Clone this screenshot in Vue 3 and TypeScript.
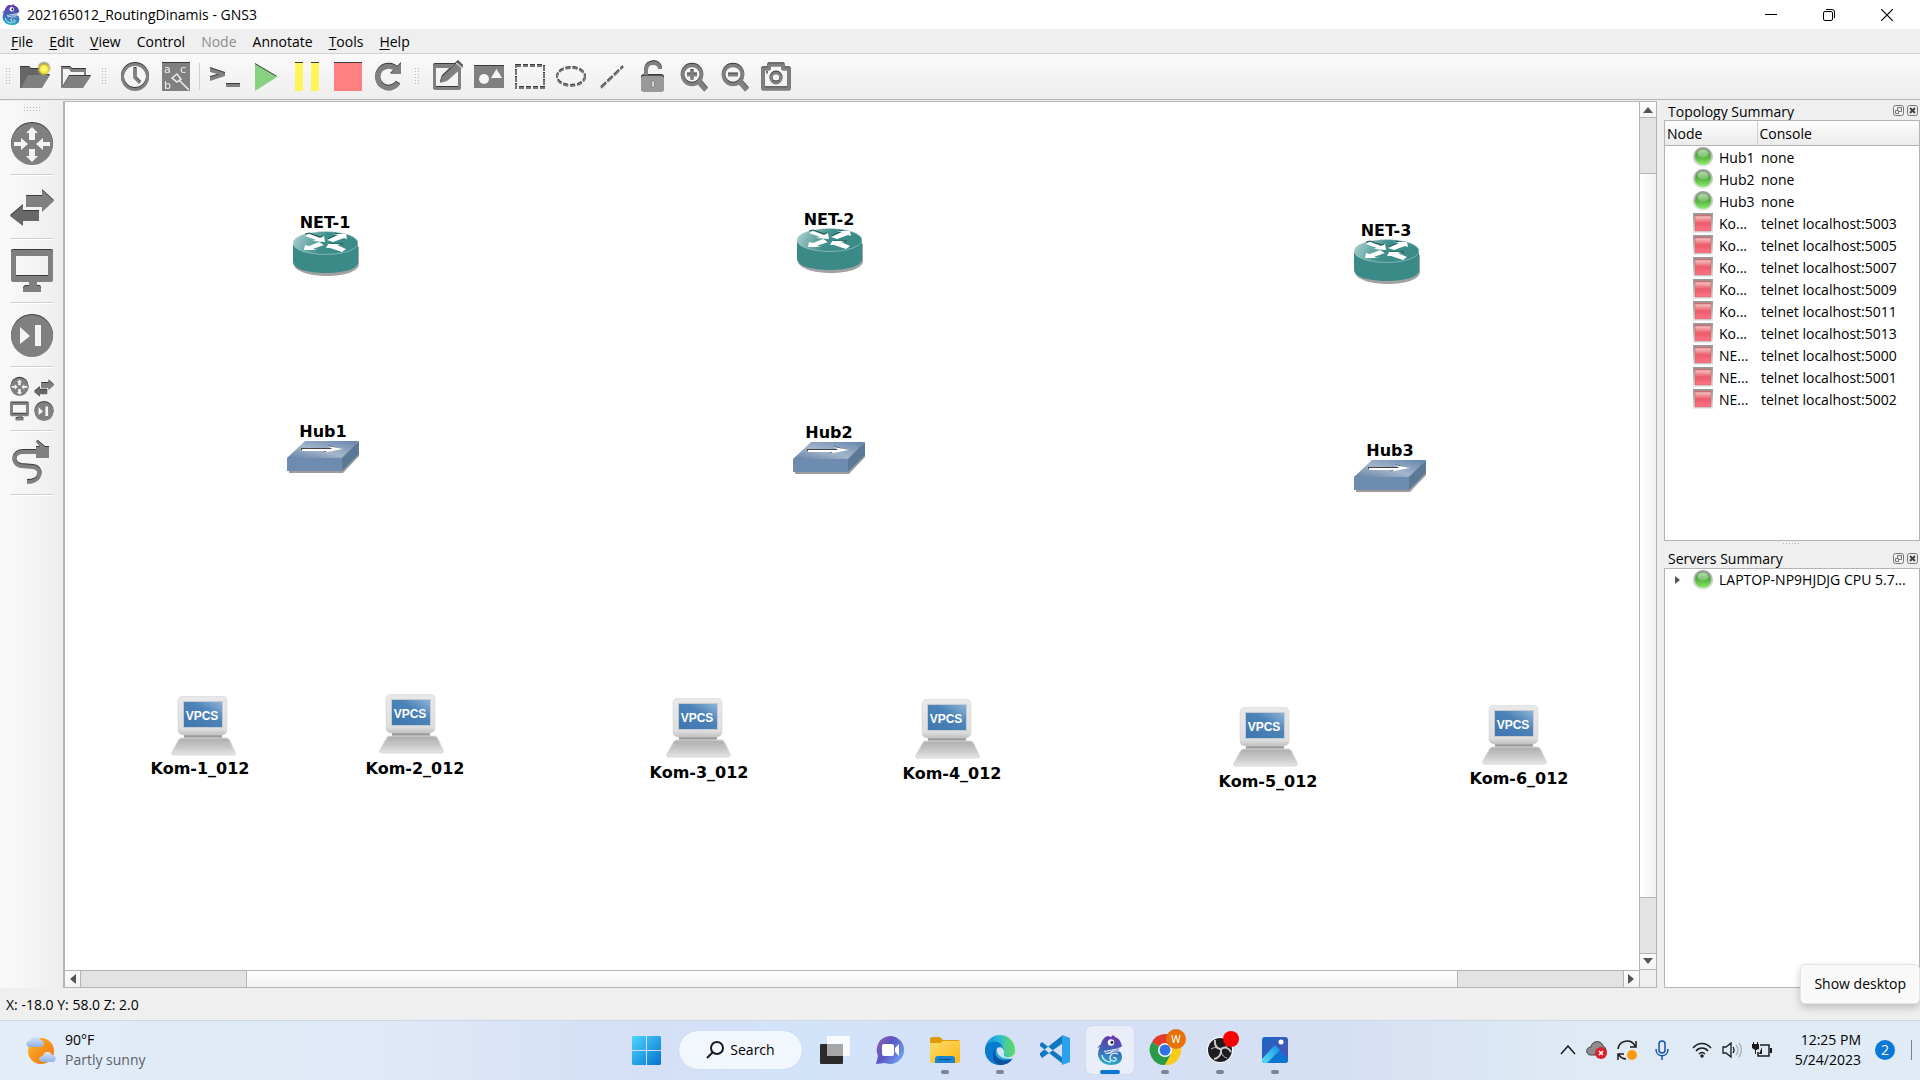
<script setup lang="ts">
type DeviceKind = 'router' | 'hub' | 'vpcs'

interface Device {
  name: string
  kind: DeviceKind
  x: number
  y: number
  labelX: number
  labelY: number
}

interface TopologyRow {
  node: string
  console: string
  running: boolean
}

// Icon origin and label centre, in canvas coordinates
const devices: Device[] = [
  { name: 'NET-1', kind: 'router', x: 228, y: 129, labelX: 260, labelY: 121 },
  { name: 'NET-2', kind: 'router', x: 732, y: 126, labelX: 764, labelY: 118 },
  { name: 'NET-3', kind: 'router', x: 1289, y: 137, labelX: 1321, labelY: 129 },
  { name: 'Hub1', kind: 'hub', x: 222, y: 339, labelX: 258, labelY: 330 },
  { name: 'Hub2', kind: 'hub', x: 728, y: 340, labelX: 764, labelY: 331 },
  { name: 'Hub3', kind: 'hub', x: 1289, y: 358, labelX: 1325, labelY: 349 },
  { name: 'Kom-1_012', kind: 'vpcs', x: 106, y: 594, labelX: 135, labelY: 667 },
  { name: 'Kom-2_012', kind: 'vpcs', x: 314, y: 592, labelX: 350, labelY: 667 },
  { name: 'Kom-3_012', kind: 'vpcs', x: 601, y: 596, labelX: 634, labelY: 671 },
  { name: 'Kom-4_012', kind: 'vpcs', x: 850, y: 597, labelX: 887, labelY: 672 },
  { name: 'Kom-5_012', kind: 'vpcs', x: 1168, y: 605, labelX: 1203, labelY: 680 },
  { name: 'Kom-6_012', kind: 'vpcs', x: 1417, y: 603, labelX: 1454, labelY: 677 },
]

const iconSize: Record<DeviceKind, [number, number]> = {
  router: [66, 45],
  hub: [72, 33],
  vpcs: [65, 60],
}

const rows: TopologyRow[] = [
  { node: 'Hub1', console: 'none', running: true },
  { node: 'Hub2', console: 'none', running: true },
  { node: 'Hub3', console: 'none', running: true },
  ...[5003, 5005, 5007, 5009, 5011, 5013].map((p) => ({
    node: 'Ko...',
    console: `telnet localhost:${p}`,
    running: false,
  })),
  ...[5000, 5001, 5002].map((p) => ({
    node: 'NE...',
    console: `telnet localhost:${p}`,
    running: false,
  })),
]

const menus = [
  { key: 'F', rest: 'ile' },
  { key: 'E', rest: 'dit' },
  { key: 'V', rest: 'iew' },
  { key: '', rest: 'Control' },
  { key: '', rest: 'Node', disabled: true },
  { key: '', rest: 'Annotate' },
  { key: 'T', rest: 'ools' },
  { key: 'H', rest: 'elp' },
]
</script>

<template>
  <div class="screen">
    <svg class="defs" width="0" height="0" aria-hidden="true">
      <defs>
        <linearGradient id="gTeal" x1="0" y1="0.2" x2="1" y2="0.4">
          <stop offset="0" stop-color="#a9cfce" /><stop offset="0.5" stop-color="#3f8f8c" /><stop offset="1" stop-color="#3a8a87" />
        </linearGradient>
        <linearGradient id="gHub" x1="0" y1="1" x2="1" y2="0">
          <stop offset="0" stop-color="#6482a6" /><stop offset="0.45" stop-color="#a3b5cb" /><stop offset="1" stop-color="#6484ac" />
        </linearGradient>
        <linearGradient id="gCase" x1="0" y1="0" x2="0" y2="1">
          <stop offset="0" stop-color="#e9e9e9" /><stop offset="0.85" stop-color="#dedede" /><stop offset="1" stop-color="#c0c0c0" />
        </linearGradient>
        <linearGradient id="gBase" x1="0" y1="0" x2="0" y2="1">
          <stop offset="0" stop-color="#adadad" /><stop offset="0.6" stop-color="#cbcbcb" /><stop offset="1" stop-color="#e6e6e6" />
        </linearGradient>
        <linearGradient id="gScreen" x1="0" y1="1" x2="1" y2="0">
          <stop offset="0" stop-color="#3f76ae" /><stop offset="0.6" stop-color="#4c83b8" /><stop offset="1" stop-color="#8db5d8" />
        </linearGradient>
        <linearGradient id="gRing" x1="0" y1="0" x2="0" y2="1">
          <stop offset="0" stop-color="#989898" /><stop offset="1" stop-color="#ececec" />
        </linearGradient>
        <linearGradient id="gGreen" x1="0" y1="0" x2="0" y2="1">
          <stop offset="0" stop-color="#4c9a3c" /><stop offset="0.5" stop-color="#55b340" /><stop offset="1" stop-color="#8cf06a" />
        </linearGradient>
        <linearGradient id="gGloss" x1="0" y1="0" x2="0" y2="1">
          <stop offset="0" stop-color="#fff" stop-opacity="0.6" /><stop offset="1" stop-color="#fff" stop-opacity="0.2" />
        </linearGradient>
        <linearGradient id="gRed" x1="0" y1="0" x2="0" y2="1">
          <stop offset="0" stop-color="#c05a5e" /><stop offset="0.12" stop-color="#f6b9b9" /><stop offset="0.5" stop-color="#ee5a69" /><stop offset="1" stop-color="#ff7585" />
        </linearGradient>
        <linearGradient id="gGns" x1="0.5" y1="0" x2="0.4" y2="1">
          <stop offset="0" stop-color="#6a35b0" /><stop offset="0.5" stop-color="#3f63b5" /><stop offset="1" stop-color="#25b0c8" />
        </linearGradient>
        <linearGradient id="gWin" x1="0" y1="0" x2="1" y2="1">
          <stop offset="0" stop-color="#4fd5ff" /><stop offset="1" stop-color="#0473d0" />
        </linearGradient>
        <linearGradient id="gChat" x1="0" y1="0" x2="1" y2="0.6">
          <stop offset="0" stop-color="#9a5fa8" /><stop offset="0.5" stop-color="#5b57c4" /><stop offset="1" stop-color="#6e9bf0" />
        </linearGradient>
        <linearGradient id="gFolder" x1="0" y1="0" x2="1" y2="1">
          <stop offset="0" stop-color="#ffdb6a" /><stop offset="1" stop-color="#f9b813" />
        </linearGradient>
        <linearGradient id="gEdge" x1="0" y1="0.5" x2="1" y2="0.4">
          <stop offset="0" stop-color="#0c86d8" /><stop offset="0.5" stop-color="#29b8dc" /><stop offset="1" stop-color="#66e04a" />
        </linearGradient>
        <linearGradient id="gPhoto" x1="0" y1="0" x2="1" y2="1">
          <stop offset="0" stop-color="#1666c8" /><stop offset="1" stop-color="#5b4fae" />
        </linearGradient>
        <linearGradient id="gPeak" x1="0" y1="1" x2="1" y2="0">
          <stop offset="0" stop-color="#5be3fb" /><stop offset="1" stop-color="#1a90e0" />
        </linearGradient>
        <linearGradient id="gSun" x1="0" y1="0" x2="1" y2="1">
          <stop offset="0" stop-color="#f7be2c" /><stop offset="1" stop-color="#f4680c" />
        </linearGradient>
        <linearGradient id="gCloud" x1="0" y1="0" x2="0" y2="1">
          <stop offset="0" stop-color="#dce8fa" /><stop offset="1" stop-color="#8fb0ea" />
        </linearGradient>
        <radialGradient id="gGlow">
          <stop offset="0" stop-color="#fff9a0" /><stop offset="0.5" stop-color="#fdf03c" /><stop offset="1" stop-color="#fdf03c" stop-opacity="0" />
        </radialGradient>
      </defs>

      <symbol id="router" viewBox="0 0 66 45">
        <path d="M1 16v17c0 7 15 12 33 12s32-5 32-12V16z" fill="#a2a2a2" />
        <path d="M0 13v18c0 7 15 11 33 11s32-4 32-11V13z" fill="#3a8a87" />
        <ellipse cx="32.500" cy="12" rx="32.500" ry="11.500" fill="url(#gTeal)" stroke="#c4dddc" stroke-width="0.500" />
        <path d="M12 3l4-1 11 4 3-1M35 8l10-5-3-1M31 13l-11 5M34 14l3-1 13 0" fill="none" stroke="#1d4f4d" />
        <g fill="#fff">
          <path d="M12 5l4-2 11 4 4-2 1 6-13-1 4-1z" />
          <path d="M34 9l11-5-5-1 13 0 1 5-3-1-11 4z" />
          <path d="M31 14l-11 4 4 1-13 0 1-5 4 1 10-4z" />
          <path d="M53 18l-9-4 4-1-13 0-2 4 4 0 12 4z" />
        </g>
      </symbol>
      <symbol id="hub" viewBox="0 0 72 33">
        <path d="M2 18v14h54L72 15V2z" fill="#9c9c9c" />
        <path d="M0 17L18 0h54L55 17z" fill="url(#gHub)" />
        <path d="M0 17h55v13H0z" fill="#6d8cb0" />
        <path d="M55 17L72 0v13L55 30z" fill="#5b7897" />
        <path d="M14 7h30l-3-3 13 4-18 4 3-3H14z" fill="#444" />
        <path d="M15 8h30l-4-3 15 3-20 4 4-2H15z" fill="#fff" />
      </symbol>
      <symbol id="vpcs" viewBox="0 0 65 60">
        <path d="M13 38h38v5H13z" fill="#9a9a9a" />
        <path d="M11 42h44c2 0 3 1 4 3l5 11c1 2 0 3-2 3H3c-2 0-3-1-2-3l6-11c1-2 2-3 4-3z" fill="url(#gBase)" stroke="#d8d8d8" />
        <rect x="7" y="0" width="49" height="39" rx="5" fill="url(#gCase)" stroke="#cfcfcf" stroke-width="0.500" />
        <rect x="12" y="5" width="40" height="27" fill="#c3cbd3" />
        <rect x="13" y="6" width="38" height="25" fill="url(#gScreen)" />
      </symbol>
      <symbol id="led-on" viewBox="0 0 20 20">
        <circle cx="10" cy="10" r="10" fill="url(#gRing)" />
        <circle cx="10" cy="10" r="8" fill="url(#gGreen)" />
        <ellipse cx="10" cy="6.500" rx="5.500" ry="4" fill="url(#gGloss)" />
      </symbol>
      <symbol id="led-off" viewBox="0 0 20 20">
        <rect width="20" height="20" fill="url(#gRing)" />
        <rect x="2" y="2" width="16" height="16" fill="url(#gRed)" stroke="#b46468" stroke-width="0.500" />
      </symbol>
      <symbol id="gns" viewBox="0 0 28 30">
        <path d="M12 1l3 1 2-2 2 2c3 1 5 3 6 6l1 3c-2 2-4 2-6 2h5l-3 2c3 2 4 4 4 7 0 5-4 8-11 8C8 30 3 26 2 20c0-4 1-6 2-8L1 13l4-4C6 5 8 2 12 1z" fill="url(#gGns)" />
        <circle cx="15" cy="7.500" r="3.200" fill="#fff" />
        <circle cx="16" cy="7.500" r="1.400" fill="#15203d" />
        <path d="M8 16c3 1 6-1 8-1l11-2M17 16l9 0M9 18c4 1 7-1 8-2" fill="none" stroke="#e6eef8" stroke-width="1.200" />
        <path d="M22 19c-4-2-8 0-8 4 0 3 5 4 6 2s-2-3-3-2M6 20c0 4 4 7 9 7" fill="none" stroke="#d7f0f5" stroke-width="1.300" />
      </symbol>
      <symbol id="dev-router" viewBox="0 0 44 44">
        <circle cx="22" cy="23" r="21" fill="#808080" />
        <path d="M22 6l6 6h-3v7h-6v-7h-3zM22 41l-6-6h3v-7h6v7h3zM4 21h7v-4l7 6-7 6v-4H4zM40 21h-7v-4l-7 6 7 6v-4h7z" fill="#f4f4f4" />
      </symbol>
      <symbol id="dev-switch" viewBox="0 0 44 44">
        <path d="M16 11h16V5l12 11-12 11v-5H16z" fill="#808080" />
        <path d="M29 26H13v-6L0 31l13 10v-5h16z" fill="#686868" />
      </symbol>
      <symbol id="dev-pc" viewBox="0 0 44 44">
        <path fill-rule="evenodd" d="M3 1h38q2 0 2 2v28q0 2-2 2H27v4h3l1 2v4H13v-4l2-2h4v-4H3q-2 0-2-2V3q0-2 2-2zM6 7v20h32V7z" fill="#808080" />
      </symbol>
      <symbol id="dev-sec" viewBox="0 0 44 44">
        <circle cx="22" cy="23" r="21" fill="#808080" />
        <path d="M10 14l10 9-10 8zM25 12h6v21h-6z" fill="#f4f4f4" />
      </symbol>
    </svg>

    <header class="titlebar">
      <svg class="title-icon" viewBox="0 0 28 30"><use href="#gns" /></svg>
      <h1>202165012_RoutingDinamis - GNS3</h1>
      <div class="window-buttons">
        <button aria-label="Minimize"><svg width="12" height="12"><path d="M0 5.500h12" stroke="#000" /></svg></button>
        <button aria-label="Restore">
          <svg width="12" height="12" fill="none" stroke="#000"><rect x="0.500" y="2.500" width="9" height="9" rx="1.500" /><path d="M3 .5h6q2.500 0 2.500 2.500v6" /></svg>
        </button>
        <button aria-label="Close"><svg width="12" height="12"><path d="M0 0l12 12M12 0L0 12" stroke="#000" stroke-width="1.200" /></svg></button>
      </div>
    </header>

    <nav class="menubar">
      <button v-for="m in menus" :key="m.rest" :disabled="m.disabled"><u v-if="m.key">{{ m.key }}</u>{{ m.rest }}</button>
    </nav>

    <div class="toolbar">
      <span class="grip first"></span>
      <button aria-label="New project">
        <svg viewBox="0 0 32 32"><path class="dark" d="M1 6h9l2 2h15v10H10L3 27H1z" /><path d="M9 14h22l-8 13H2z" class="g" /><circle cx="25" cy="8" r="7" fill="url(#gGlow)" /></svg>
      </button>
      <button aria-label="Open project">
        <svg viewBox="0 0 32 32"><path class="g" d="M1 6h9l2 2h14v6h-2v-3H11L9 8H3v17l-1 2H1z" /><path d="M9 15h22l-8 12H2z" class="g" /></svg>
      </button>
      <span class="grip"></span>
      <button aria-label="Snapshots">
        <svg viewBox="0 0 32 32"><circle cx="16" cy="16" r="12.500" fill="none" stroke="#808080" stroke-width="3" /><path d="M16 7v10l5 5" fill="none" stroke="#808080" stroke-width="3" /></svg>
      </button>
      <button aria-label="Show interface labels">
        <svg viewBox="0 0 32 32"><path class="g" d="M2 2h28v28H2z" /><g fill="#eee" font-family="DejaVu Sans, sans-serif" font-size="11"><text x="4" y="12">a</text><text x="20" y="12">c</text><text x="4" y="28">b</text></g><path d="M12 17l5-4 4 5-4 3zM19 19l10 10" fill="none" stroke="#eee" stroke-width="1.500" /></svg>
      </button>
      <span class="separator"></span>
      <button aria-label="Console">
        <svg viewBox="0 0 32 32"><path class="g" d="M1 7l15 5v3L1 20v-4l9-2.500L1 11zM17 23h14v3H17z" /></svg>
      </button>
      <button aria-label="Start"><svg viewBox="0 0 32 32"><path d="M5 3l22 13L5 30z" fill="#88d180" /></svg></button>
      <button aria-label="Pause"><svg viewBox="0 0 32 32"><path d="M4 2h8v28H4zM20 2h8v28h-8z" fill="#fff45c" /></svg></button>
      <button aria-label="Stop"><svg viewBox="0 0 32 32"><path d="M2 2h28v28H2z" fill="#ff8080" /></svg></button>
      <button aria-label="Reload">
        <svg viewBox="0 0 32 32"><path d="M25 22a11 11 0 1 1-1-13" fill="none" stroke="#808080" stroke-width="5" /><path class="g" d="M28 2v11H17z" /></svg>
      </button>
      <span class="grip"></span>
      <button aria-label="Add a note">
        <svg viewBox="0 0 32 32"><path class="g" fill-rule="evenodd" d="M3 3h24q2 0 2 2v22q0 2-2 2H3q-2 0-2-2V5q0-2 2-2zM4 7v19h22V7z" /><path class="g soft" d="M8 22l2-6L26 1l5 5-16 14z" /><path d="M24 2l6 5" stroke="#eee" /></svg>
      </button>
      <button aria-label="Insert a picture">
        <svg viewBox="0 0 32 32"><path class="g" d="M1 5h30v22H1z" /><circle cx="11" cy="18" r="5" fill="#f4f4f4" /><path d="M18 17l5.500-9 5.500 9z" fill="#f4f4f4" /></svg>
      </button>
      <button aria-label="Draw a rectangle">
        <svg viewBox="0 0 32 32"><rect x="2" y="5" width="28" height="22" fill="none" stroke="#777" stroke-width="2" stroke-dasharray="5 2" /></svg>
      </button>
      <button aria-label="Draw an ellipse">
        <svg viewBox="0 0 32 32"><ellipse cx="16" cy="16" rx="14" ry="9" fill="none" stroke="#777" stroke-width="2" stroke-dasharray="5 2" /></svg>
      </button>
      <button aria-label="Draw a line">
        <svg viewBox="0 0 32 32"><path d="M5 27L27 6" stroke="#777" stroke-width="2" stroke-dasharray="7 2" /></svg>
      </button>
      <button aria-label="Lock items">
        <svg viewBox="0 0 32 32"><path d="M9 16V9c0-9 14-9 14-1" fill="none" stroke="#808080" stroke-width="4" /><rect class="soft" x="4" y="15" width="23" height="16" rx="3" fill="#999" /><path d="M15 20h2v6h-2z" fill="#fff" stroke="#555" stroke-width="0.500" /></svg>
      </button>
      <button aria-label="Zoom in">
        <svg viewBox="0 0 32 32" fill="none" stroke="#808080"><circle cx="14" cy="14" r="9.500" stroke-width="3.500" /><path d="M20 20l8 9" stroke-width="5" /><path d="M14 9v10M9 14h10" stroke-width="3" /></svg>
      </button>
      <button aria-label="Zoom out">
        <svg viewBox="0 0 32 32" fill="none" stroke="#808080"><circle cx="14" cy="14" r="9.500" stroke-width="3.500" /><path d="M20 20l8 9" stroke-width="5" /><path d="M9 14h10" stroke-width="3" /></svg>
      </button>
      <button aria-label="Take a screenshot">
        <svg viewBox="0 0 32 32"><path d="M3 8h6V4h14v4h6v20H3z" fill="none" stroke="#808080" stroke-width="3.500" stroke-linejoin="round" /><circle cx="16" cy="17" r="5" fill="none" stroke="#808080" stroke-width="3" /><circle cx="7" cy="12" r="1" class="g" /></svg>
      </button>
    </div>

    <main class="workspace">
      <aside class="devices">
        <span class="grip wide"></span>
        <button aria-label="Routers"><svg viewBox="0 0 44 44"><use href="#dev-router" /></svg></button>
        <button aria-label="Switches"><svg viewBox="0 0 44 44"><use href="#dev-switch" /></svg></button>
        <button aria-label="End devices"><svg viewBox="0 0 44 44"><use href="#dev-pc" /></svg></button>
        <button aria-label="Security devices"><svg viewBox="0 0 44 44"><use href="#dev-sec" /></svg></button>
        <button aria-label="All devices">
          <svg viewBox="0 0 44 44">
            <use href="#dev-router" x="0" y="0" width="19" height="19" />
            <use href="#dev-switch" x="24" y="1" width="20" height="20" />
            <use href="#dev-pc" x="0" y="25" width="19" height="19" />
            <use href="#dev-sec" x="24" y="24" width="20" height="20" />
          </svg>
        </button>
        <button aria-label="Add a link">
          <svg viewBox="0 0 44 44"><path d="M27 11H13c-10 0-12 12-2 14l12 1c10 1 9 15-6 15" fill="none" stroke="#808080" stroke-width="4" /><path class="g" d="M26 6h4l-4-5 2-1 7 6h4v11H26z" /></svg>
        </button>
      </aside>

      <section class="canvas-frame">
        <div class="canvas">
          <template v-for="d in devices" :key="d.name">
            <svg
              class="device"
              :width="iconSize[d.kind][0]"
              :height="iconSize[d.kind][1]"
              :style="{ left: d.x + 'px', top: d.y + 'px' }"
            >
              <use :href="'#' + d.kind" />
              <text v-if="d.kind === 'vpcs'" class="screen-text" x="31" y="24">VPCS</text>
            </svg>
            <span class="device-label" :style="{ left: d.labelX + 'px', top: d.labelY + 'px' }">{{ d.name }}</span>
          </template>
        </div>
        <div class="vbar">
          <button aria-label="Scroll up"><svg width="10" height="6"><path d="M0 6l5-6 5 6z" fill="#555" /></svg></button>
          <span class="groove"></span><span class="handle"></span><span class="groove"></span>
          <button aria-label="Scroll down"><svg width="10" height="6"><path d="M0 0l5 6 5-6z" fill="#555" /></svg></button>
        </div>
        <div class="hbar">
          <button aria-label="Scroll left"><svg width="6" height="10"><path d="M6 0L0 5l6 5z" fill="#555" /></svg></button>
          <span class="groove"></span><span class="handle"></span><span class="groove"></span>
          <button aria-label="Scroll right"><svg width="6" height="10"><path d="M0 0l6 5-6 5z" fill="#555" /></svg></button>
        </div>
        <div class="corner"></div>
      </section>

      <aside class="docks">
        <section class="dock">
          <header>
            <h2>Topology Summary</h2>
            <button aria-label="Float"><svg width="11" height="11" fill="none" stroke="#777"><rect x="0.500" y="0.500" width="10" height="10" rx="2" /><path d="M2.500 5.500h3v3h-3zM4.500 5V2.500h4v4H6" /></svg></button>
            <button aria-label="Close"><svg width="11" height="11" fill="none" stroke="#777"><rect x="0.500" y="0.500" width="10" height="10" rx="2" /><path d="M3 3l5 5M8 3L3 8" stroke="#444" stroke-width="2" /></svg></button>
          </header>
          <div class="dock-body">
            <table>
              <thead><tr><th class="col-node">Node</th><th>Console</th></tr></thead>
              <tbody>
                <tr v-for="(r, i) in rows" :key="i">
                  <td class="node-cell"><div><svg width="20" height="20"><use :href="r.running ? '#led-on' : '#led-off'" /></svg>{{ r.node }}</div></td>
                  <td>{{ r.console }}</td>
                </tr>
              </tbody>
            </table>
          </div>
        </section>
        <span class="grip splitter"></span>
        <section class="dock">
          <header>
            <h2>Servers Summary</h2>
            <button aria-label="Float"><svg width="11" height="11" fill="none" stroke="#777"><rect x="0.500" y="0.500" width="10" height="10" rx="2" /><path d="M2.500 5.500h3v3h-3zM4.500 5V2.500h4v4H6" /></svg></button>
            <button aria-label="Close"><svg width="11" height="11" fill="none" stroke="#777"><rect x="0.500" y="0.500" width="10" height="10" rx="2" /><path d="M3 3l5 5M8 3L3 8" stroke="#444" stroke-width="2" /></svg></button>
          </header>
          <div class="dock-body">
            <div class="server">
              <svg width="5" height="8"><path d="M0 0l5 4-5 4z" fill="#555" /></svg>
              <svg class="led" width="20" height="20"><use href="#led-on" /></svg>
              <span>LAPTOP-NP9HJDJG CPU 5.7...</span>
            </div>
          </div>
        </section>
      </aside>
    </main>

    <div class="statusbar">X: -18.0 Y: 58.0 Z: 2.0</div>

    <footer class="taskbar">
      <button class="weather">
        <svg width="30" height="28" viewBox="0 0 30 28">
          <circle cx="15" cy="15" r="13" fill="url(#gSun)" />
          <path d="M4 11c-5 0-5-6 0-6 1-6 9-6 10-1 5 0 5 7 0 7z" fill="url(#gCloud)" />
          <path d="M17 26c-5 0-5-6 0-6 1-6 8-5 9-1 5 0 5 7 0 7z" fill="url(#gCloud)" />
        </svg>
        <span class="weather-text"><span>90°F</span><span class="muted">Partly sunny</span></span>
      </button>

      <div class="apps">
        <button aria-label="Start">
          <svg width="29" height="29" viewBox="0 0 29 29"><path d="M1 0h13v14H0V1zM15 0h13l1 1v13H15zM0 15h14v14H1l-1-1zM15 15h14v13l-1 1H15z" fill="url(#gWin)" /></svg>
        </button>
        <button class="search">
          <svg width="18" height="18" fill="none" stroke="#1b1b1b" stroke-width="2"><circle cx="11" cy="7" r="6" /><path d="M7 11l-6 6" /></svg>
          Search
        </button>
        <button aria-label="Task view">
          <svg width="30" height="28" viewBox="0 0 30 28"><rect y="8" width="23" height="20" rx="1" fill="#2b2b2b" /><rect x="7" y="0" width="23" height="20" rx="1" fill="#fff" fill-opacity="0.850" /><path d="M7 8h16v12H7z" fill="#a6a6a6" /></svg>
        </button>
        <button aria-label="Chat">
          <svg width="29" height="28" viewBox="0 0 29 28"><path d="M15 0a14 14 0 1 1-6 27l-9 1 2-8A14 14 0 0 1 15 0z" fill="url(#gChat)" /><rect x="6" y="8" width="12" height="12" rx="2" fill="#fff" /><path d="M19 12l4-4v12l-4-4z" fill="#fff" /></svg>
        </button>
        <button aria-label="File Explorer" class="running">
          <svg width="30" height="27" viewBox="0 0 30 27"><path d="M0 2q0-2 2-2h8l3 3h15q2 0 2 2v5H0z" fill="#e09a05" /><path d="M0 6h10l3-2h17v20q0 2-2 2H2q-2 0-2-2z" fill="url(#gFolder)" /><path d="M5 26v-4q0-3 3-3h14q3 0 3 3v4z" fill="#1683d3" /><path d="M9 22.500h12" stroke="#0b4a86" /></svg>
        </button>
        <button aria-label="Edge" class="running">
          <svg width="30" height="30" viewBox="0 0 30 30"><circle cx="15" cy="15" r="15" fill="url(#gEdge)" /><path d="M0 15C1 7 8 6 12 7c4 1 7 4 7 8-4-5-9-1-8 4 1 5 8 7 17 4-4 6-9 7-13 7C7 30 0 24 0 15z" fill="#0a7ad0" /><path d="M11 13c-4 7 2 15 14 12 1 0 3-1 3-2-3 5-8 7-13 7-6-1-10-10-4-17z" fill="#11509e" /><path d="M30 17c-1 4-5 6-9 5-3-1-2-2-2-5 0-4-4-6-7-4 0 0-2 8 8 10 4 1 8 1 8 0z" fill="#d8e2f6" /><path d="M15 12c4 0 4 3 4 6 1 2 6 2 11-2 0-8-6-10-9-10z" fill="#53d28a" opacity="0.500" /></svg>
        </button>
        <button aria-label="Visual Studio Code">
          <svg width="30" height="30" viewBox="0 0 30 30"><path d="M0 9l2-2 21 16v6L0 11zM0 20l2 3L23 8V0L0 18z" fill="#0f78c0" /><path d="M22 0l8 3v24l-8 3z" fill="#2ba0ee" /></svg>
        </button>
        <button aria-label="GNS3" class="active">
          <svg width="28" height="30"><use href="#gns" /></svg>
        </button>
        <button aria-label="Chrome" class="running">
          <svg width="44" height="44" viewBox="-7 -1 44 44">
            <path d="M15 21L2 13a15 15 0 0 1 26-1z" fill="#e23a2e" /><path d="M15 21L2 13a15 15 0 0 0 13 23l7-12z" fill="#2a9c48" /><path d="M15 21l13-9a15 15 0 0 1-13 24l6-11z" fill="#fccb1a" />
            <circle cx="15" cy="21" r="7" fill="#fff" /><circle cx="15" cy="21" r="5.500" fill="#2f72e4" />
            <circle cx="26" cy="10" r="10" fill="#e8710a" /><text x="26" y="14" text-anchor="middle" font-size="11" fill="#fff" font-family="Roboto, sans-serif">W</text>
          </svg>
        </button>
        <button aria-label="OBS Studio" class="running">
          <svg width="40" height="40" viewBox="-7 -1 40 40"><circle cx="13" cy="19" r="13" fill="#fff" /><circle cx="13" cy="19" r="12" fill="#1c1b20" /><g fill="none" stroke="#c9c9cb" stroke-width="2"><path d="M8 9c-1 5 2 9 6 9M14 18c4-3 8-1 10 3M14 18c1 5-2 9-7 10" /><path d="M4 18c3-2 7-2 9 1M20 10c1 4-2 8-6 8M20 27c-4-1-6-4-6-9" stroke-width="1" /></g><circle cx="24" cy="8" r="8" fill="#f90000" /></svg>
        </button>
        <button aria-label="Photos" class="running">
          <svg width="26" height="26" viewBox="0 0 26 26"><rect width="26" height="26" rx="3" fill="url(#gPhoto)" /><path d="M0 22L11 10q2-2 4 0l11 11v2q0 3-3 3H3q-3 0-3-3z" fill="#0d74cf" /><path d="M0 22L11 10q2-2 4 0l3 3L5 26H3q-3 0-3-3z" fill="url(#gPeak)" /><circle cx="19" cy="5" r="2.500" fill="#fff" /></svg>
        </button>
      </div>

      <div class="tray">
        <button class="t-chevron" aria-label="Hidden icons"><svg width="16" height="10"><path d="M1 9l7-8 7 8" fill="none" stroke="#1b1b1b" stroke-width="1.500" /></svg></button>
        <button aria-label="OneDrive"><svg width="21" height="18" viewBox="0 0 21 18"><path d="M4 14c-5-1-4-8 1-8 1-7 11-7 12-1 4 1 4 9 0 9z" fill="#8d8d8d" stroke="#444" /><circle cx="15" cy="12" r="6" fill="#d9222b" /><path d="M13 10l4 4M17 10l-4 4" stroke="#fff" stroke-width="1.500" /></svg></button>
        <button aria-label="Updates"><svg width="21" height="21" viewBox="0 0 21 21"><path d="M1 9a9 9 0 0 1 17-3M19 1v6h-6M9 19a9 9 0 0 1-7-4M1 20v-6h6" fill="none" stroke="#1b1b1b" stroke-width="1.500" /><circle cx="15" cy="15" r="5" fill="#ff9a0a" /></svg></button>
        <button class="t-mic" aria-label="Microphone"><svg width="14" height="20" viewBox="0 0 14 20" fill="none" stroke="#1553a4" stroke-width="1.500"><rect x="4" y="1" width="6" height="12" rx="3" /><path d="M1 9c0 9 12 9 12 0M7 16v4" /></svg></button>
        <button class="status-icons" aria-label="Network, volume and battery">
          <svg width="20" height="16" viewBox="0 0 20 16" fill="none" stroke="#1b1b1b" stroke-width="1.500"><path d="M1 6c5-6 13-6 18 0M4 9c3-4 9-4 12 0M7 12c2-2 4-2 6 0" /><circle cx="10" cy="14" r="1" fill="#1b1b1b" /></svg>
          <svg width="20" height="16" viewBox="0 0 20 16" fill="none" stroke="#1b1b1b" stroke-width="1.300"><path d="M1 5h3l5-4v14l-5-4H1zM11 5q2 3 0 6" /><path d="M14 3q4 5 0 10M17 1q5 7 0 14" stroke="#a9b1b8" /></svg>
          <svg width="20" height="16" viewBox="0 0 20 16"><path d="M8 3h9v11H6v-4" fill="none" stroke="#1b1b1b" stroke-width="1.500" /><path d="M18 6h2v5h-2zM10 5v7H7zM1 0h1v2h3V0h1v2h1v5L4 8v4H3V8L0 6V2h1z" fill="#1b1b1b" /></svg>
        </button>
        <button class="clock"><span>12:25 PM</span><span>5/24/2023</span></button>
        <button class="badge" aria-label="2 notifications">2</button>
        <button class="peek" aria-label="Show desktop"></button>
        <span class="tooltip" role="tooltip">Show desktop</span>
      </div>
    </footer>
  </div>
</template>

<style>
body {
  margin: 0;
}
</style>

<style scoped>
.screen {
  display: flex;
  flex-direction: column;
  min-height: 100vh;
  background: #efefef;
  color: #000;
  font: 14px/20px "Open Sans", "Noto Sans", sans-serif;
}
.screen *,
.screen *::before,
.screen *::after {
  box-sizing: border-box;
}
.defs {
  position: absolute;
}
button {
  display: flex;
  align-items: center;
  justify-content: center;
  padding: 0;
  border: 0;
  background: none;
  color: inherit;
  font: inherit;
}
h1,
h2 {
  margin: 0;
  font: inherit;
}
svg {
  display: block;
  flex: none;
}

.titlebar {
  display: flex;
  align-items: center;
  height: 29px;
  padding: 0 4px 0 1px;
  background: #fff;
}
.title-icon {
  width: 20px;
  height: 21px;
  margin-right: 6px;
}
.window-buttons {
  display: flex;
  margin-left: auto;
}
.window-buttons button {
  width: 58px;
  height: 29px;
}

.menubar {
  display: flex;
  gap: 16px;
  height: 25px;
  padding: 1px 11px 0;
  border-bottom: 1px solid #d2d2d2;
}
.menubar button:disabled {
  color: #8d8d8d;
}
.menubar u {
  text-underline-offset: 2px;
}

.toolbar {
  display: flex;
  align-items: center;
  height: 46px;
  border-bottom: 1px solid #b4b4b4;
  background: linear-gradient(#fafafa, #eeeeee);
}
.toolbar button {
  width: 41px;
  height: 45px;
}
.toolbar button svg {
  width: 32px;
  height: 32px;
  filter: drop-shadow(0 -1px 0 #3a3a3a);
}
.g {
  fill: #808080;
}
.dark {
  fill: #666;
}
.soft {
  filter: drop-shadow(0 -1px 0 #555);
}
.grip {
  flex: none;
  width: 18px;
  height: 18px;
  background: conic-gradient(from 270deg at 1px 1px, #b4b4b4 90deg, transparent 0) 0 0 / 3px 3px;
  background-clip: content-box;
  background-origin: content-box;
  padding: 0 6px;
}
.grip.first {
  width: 14px;
  padding: 0 3px 0 6px;
}
.separator {
  width: 8px;
  height: 27px;
  background: linear-gradient(#cfcfcf, #cfcfcf) 3px 0 / 1px 100% no-repeat;
}

.workspace {
  display: flex;
  flex: 1;
  padding-top: 1px;
}
.devices {
  width: 63px;
  flex: none;
  padding: 6px 10px 0 10px;
  background: linear-gradient(90deg, #fafafa, #eeeeee);
}
.grip.wide {
  display: block;
  width: 44px;
  height: 4px;
  padding: 0 12px 0 14px;
}
.devices button {
  width: 44px;
  height: 64px;
  border-bottom: 1px solid #cfcfcf;
  box-shadow: 0 1px 0 #fff;
}
.devices svg {
  width: 44px;
  height: 44px;
  filter: drop-shadow(0 -1px 0 #3a3a3a);
}

.canvas-frame {
  flex: 1;
  min-width: 0;
  display: grid;
  grid-template-columns: 1fr 18px;
  grid-template-rows: 1fr 18px;
  border: solid #b4b4b4;
  border-width: 1px 0 0 2px;
}
.canvas {
  position: relative;
  overflow: hidden;
  background: #fff;
}
.device {
  position: absolute;
}
.screen-text {
  fill: #fff;
  font: 700 12px "Liberation Sans", sans-serif;
  text-anchor: middle;
}
.device-label {
  position: absolute;
  transform: translate(-50%, -50%);
  font: 700 16px/20px "DejaVu Sans", sans-serif;
  white-space: nowrap;
}
.vbar,
.hbar {
  display: flex;
  border: 1px solid #b4b4b4;
}
.vbar {
  flex-direction: column;
  border-top: 0;
}
.hbar {
  border-left: 0;
  border-right: 0;
}
.vbar > *,
.hbar > * {
  flex: 1 1 0;
}
.vbar > button,
.hbar > button {
  flex: 0 0 16px;
  background: linear-gradient(#fdfdfd, #f3f3f3);
}
.groove {
  background: #e3e3e3;
}
.vbar .groove {
  flex-grow: 55;
}
.vbar .handle {
  flex-grow: 726;
  border: solid #b4b4b4;
  border-width: 1px 0;
  background: linear-gradient(90deg, #fff, #f1f1f1);
}
.vbar button:first-child {
  border-bottom: 1px solid #b4b4b4;
}
.vbar button:last-child {
  border-top: 1px solid #b4b4b4;
}
.hbar .groove {
  flex-grow: 165;
}
.hbar .handle {
  flex-grow: 1212;
  border: solid #b4b4b4;
  border-width: 0 1px;
  background: linear-gradient(#fff, #f1f1f1);
}
.hbar button:first-child {
  border-right: 1px solid #b4b4b4;
}
.hbar button:last-child {
  border-left: 1px solid #b4b4b4;
}
.corner {
  border: solid #b4b4b4;
  border-width: 0 1px 1px 1px;
}

.docks {
  flex: none;
  width: 263px;
  display: flex;
  flex-direction: column;
  padding-left: 7px;
}
.dock {
  flex: 1;
  display: flex;
  flex-direction: column;
}
.dock header {
  display: flex;
  align-items: center;
  gap: 3px;
  height: 19px;
  padding: 0 2px 0 4px;
}
.dock h2 {
  flex: 1;
  padding-top: 2px;
}
.dock-body {
  flex: 1;
  border: 1px solid #b4b4b4;
  background: #fff;
}
.grip.splitter {
  align-self: center;
  height: 8px;
  width: 18px;
  padding: 2px 0 3px;
}
table {
  width: 100%;
  table-layout: fixed;
  border-collapse: collapse;
}
th {
  height: 24px;
  padding: 2px 2px 0;
  border-bottom: 1px solid #b4b4b4;
  background: linear-gradient(#fdfdfd, #ebebeb);
  font-weight: 400;
  text-align: left;
}
.col-node {
  width: 92px;
  border-right: 1px solid #cfcfcf;
}
td {
  height: 22px;
  padding: 2px 0 0 4px;
  white-space: nowrap;
}
td.node-cell {
  padding: 0 0 0 28px;
}
.node-cell div {
  display: flex;
  gap: 6px;
  height: 20px;
  line-height: 22px;
}
.server {
  display: flex;
  align-items: center;
  height: 22px;
  padding-left: 10px;
  white-space: nowrap;
}
.led {
  margin: 0 6px 0 13px;
}

.statusbar {
  height: 32px;
  padding: 7px 6px 5px;
}

.taskbar {
  display: grid;
  grid-template-columns: 1fr auto 1fr;
  align-items: center;
  height: 60px;
  padding-bottom: 1px;
  border-top: 1px solid #cdd6e4;
  background: linear-gradient(90deg, #e2edf8 0%, #dfe9f7 20%, #d5dff6 33%, #d2e4fa 42%, #d5dff6 55%, #d6e0f3 70%, #dfeaf5 82%, #e1ebf5 100%);
}
.weather {
  justify-self: start;
  gap: 9px;
  padding-left: 26px;
}
.weather-text {
  display: flex;
  flex-direction: column;
  text-align: left;
}
.muted {
  color: #5b6168;
}
.apps {
  display: flex;
  gap: 7px;
  padding-left: 1px;
}
.apps button {
  position: relative;
  width: 48px;
  height: 48px;
  border-radius: 5px;
}
.apps .search {
  width: 123px;
  height: 38px;
  margin: 5px 2px;
  gap: 6px;
  border-radius: 19px;
  background: #f2f6fd;
  box-shadow: 0 0 1px #b4bfd2;
}
.apps .active {
  background: #e9eef9;
  box-shadow: 0 0 1px #a8b0c2;
}
.running::after,
.active::after {
  content: "";
  position: absolute;
  bottom: 0;
  left: 20px;
  width: 8px;
  height: 4px;
  border-radius: 2px;
  background: #7d8390;
}
.apps .active::after {
  left: 14px;
  width: 20px;
  background: #0a77d5;
}
.tray {
  position: relative;
  justify-self: end;
  display: flex;
  align-items: center;
  gap: 10px;
  padding-right: 8px;
}
.t-mic {
  margin: 0 13px 0 7px;
}
.status-icons {
  gap: 10px;
}
.clock {
  flex-direction: column;
  align-items: flex-end;
  width: 79px;
}
.badge {
  width: 20px;
  height: 20px;
  margin: 0 6px 0 4px;
  border-radius: 50%;
  background: #0a78d6;
  color: #fff;
}
.peek {
  width: 1px;
  height: 20px;
  background: #7c828a;
}
.tooltip {
  position: absolute;
  right: 0;
  bottom: 66px;
  padding: 9px 13px;
  border: 1px solid #e3e3e3;
  border-radius: 5px;
  background: #f9f9f9;
  box-shadow: 0 4px 8px rgba(0, 0, 0, 0.2);
  white-space: nowrap;
}
</style>
